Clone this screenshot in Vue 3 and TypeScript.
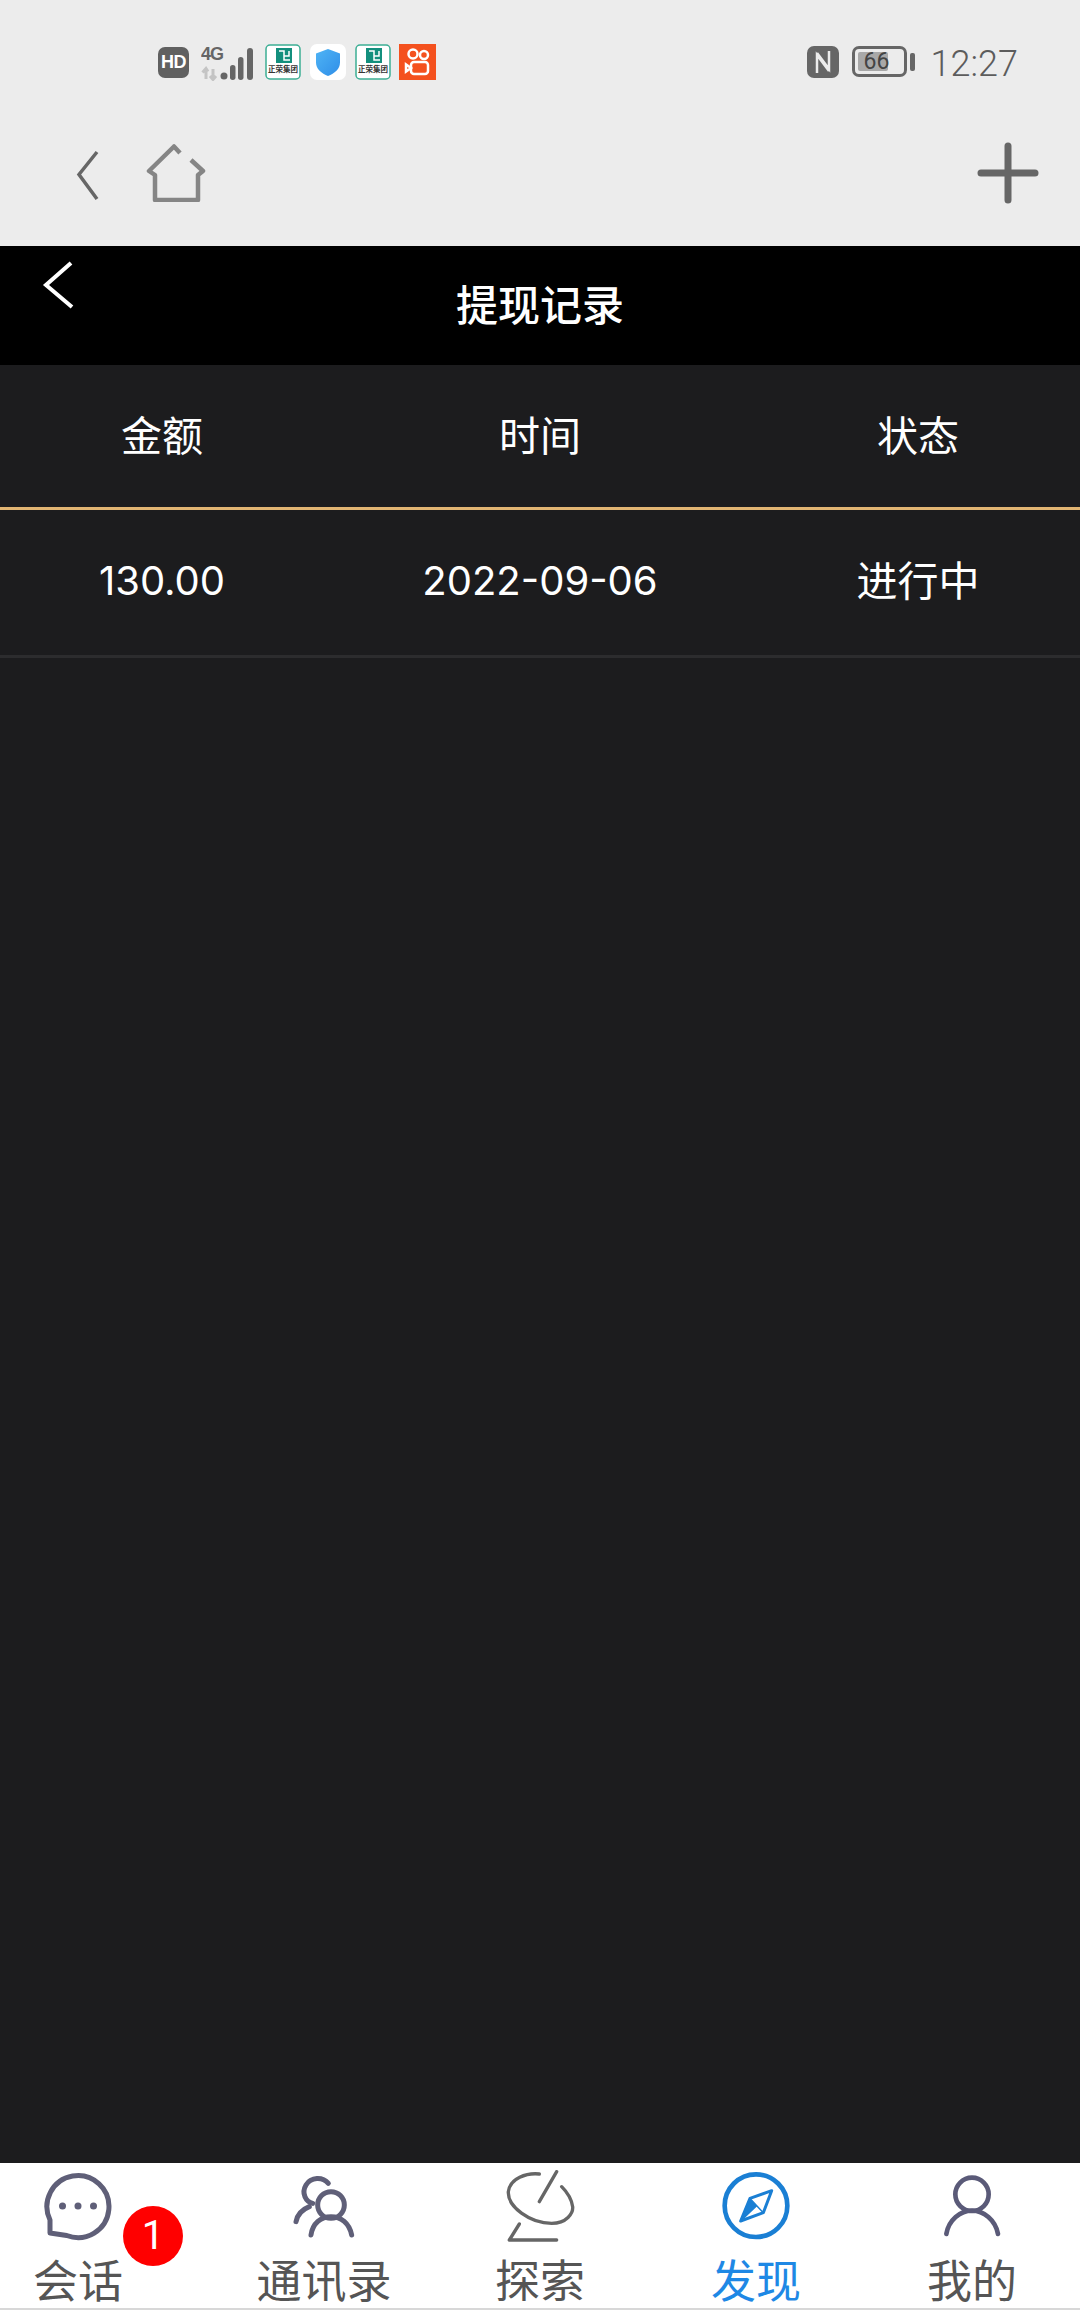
<script setup lang="ts">
interface Tab { label: string; active?: boolean; badge?: number }
const columns: string[] = ['金额', '时间', '状态']
const record: string[] = ['130.00', '2022-09-06', '进行中']
const tabs: Tab[] = [
  { label: '会话', badge: 1 },
  { label: '通讯录' },
  { label: '探索' },
  { label: '发现', active: true },
  { label: '我的' },
]
</script>

<template>
  <div class="page">
    <header class="system">
      <div class="status">
        <div class="status-left">
          <span class="hd">HD</span>
          <svg class="signal" width="54" height="36" viewBox="0 0 54 36">
            <text x="0" y="15" class="net">4G</text>
            <path d="M5 24v10M1.500 27.500 5 23.500l2 3M12 24v10M9 31l3 3.500 3-3.500" fill="none" stroke="#c4c4c4" stroke-width="3" />
            <g fill="#666">
              <circle cx="23" cy="31" r="3.500" />
              <rect x="29" y="20" width="5.500" height="15" rx="2.700" />
              <rect x="37" y="12" width="5.500" height="23" rx="2.700" />
              <rect x="46" y="3" width="6" height="32" rx="3" />
            </g>
          </svg>
          <svg class="app" width="36" height="36" viewBox="0 0 36 36">
            <rect x="1" y="1" width="34" height="34" rx="4" fill="#fff" stroke="#3cae94" stroke-width="1.500" />
            <rect x="11" y="4" width="16" height="15" fill="#138f7d" />
            <path d="M14 7h5v9h6M24 7v5h-5" fill="none" stroke="#fff" stroke-width="1.500" />
            <text x="18" y="28" class="tiny">正荣集团</text>
          </svg>
          <svg class="app" width="36" height="36" viewBox="0 0 36 36">
            <rect width="36" height="36" rx="7" fill="#fff" />
            <defs>
              <linearGradient id="shield" x1="0" y1="0" x2="1" y2="1">
                <stop offset="0" stop-color="#4fb4f5" />
                <stop offset="1" stop-color="#2f8ee8" />
              </linearGradient>
            </defs>
            <path d="M18 5 30 9.500v9C30 25 24.500 29.500 18 32 11.500 29.500 6 25 6 18.500v-9Z" fill="url(#shield)" />
          </svg>
          <svg class="app" width="36" height="36" viewBox="0 0 36 36">
            <rect x="1" y="1" width="34" height="34" rx="4" fill="#fff" stroke="#3cae94" stroke-width="1.500" />
            <rect x="11" y="4" width="16" height="15" fill="#138f7d" />
            <path d="M14 7h5v9h6M24 7v5h-5" fill="none" stroke="#fff" stroke-width="1.500" />
            <text x="18" y="28" class="tiny">正荣集团</text>
          </svg>
          <svg class="app last" width="37" height="36" viewBox="0 0 37 36">
            <rect width="37" height="36" fill="#f4511e" />
            <g fill="none" stroke="#fff" stroke-width="2.500">
              <circle cx="14" cy="10" r="4.500" />
              <circle cx="25" cy="11" r="4" />
              <rect x="12" y="18" width="17" height="12" rx="3" />
              <path d="M12 24 7 20.500v7Z" />
            </g>
          </svg>
        </div>
        <div class="status-right">
          <svg width="32" height="32" viewBox="0 0 32 32">
            <rect width="32" height="32" rx="7" fill="#666" />
            <path d="M10 27V9l12 16M22 5v18L10 7" fill="none" stroke="#ececec" stroke-width="2.500" />
          </svg>
          <div class="battery">
            <span class="battery-fill"></span>
            <span class="battery-text">66</span>
          </div>
          <span class="battery-tip"></span>
          <span class="clock">12:27</span>
        </div>
      </div>
      <div class="toolbar">
        <svg class="tool-back" width="24" height="51" viewBox="0 0 24 51">
          <path d="M21 2 3 24.500 21 49" fill="none" stroke="#666" stroke-width="3.500" />
        </svg>
        <svg class="tool-home" width="62" height="62" viewBox="0 0 62 62">
          <path d="M34 13 28 6.500 3 31l6 4v25h43V35l5-4-12-11" fill="none" stroke="#858585" stroke-width="4.500" stroke-linejoin="round" />
        </svg>
        <svg class="tool-plus" width="66" height="66" viewBox="0 0 66 66">
          <path d="M6 33h54M33 6v54" fill="none" stroke="#666" stroke-width="7" stroke-linecap="round" />
        </svg>
      </div>
    </header>

    <div class="titlebar">
      <svg class="title-back" width="34" height="50" viewBox="0 0 34 50">
        <path d="M30 3 5 25l26 22" fill="none" stroke="#fff" stroke-width="4" />
      </svg>
      <h1 class="title">提现记录</h1>
    </div>

    <main class="content">
      <div class="row head">
        <span v-for="c in columns" :key="c" class="cell">{{ c }}</span>
      </div>
      <div class="row item">
        <span v-for="v in record" :key="v" class="cell">{{ v }}</span>
      </div>
    </main>

    <nav class="tabs">
      <div
        v-for="(t, i) in tabs"
        :key="t.label"
        class="tab"
        :class="{ active: t.active, first: i === 0 }"
      >
        <svg v-if="i === 0" class="icon" width="72" height="72" viewBox="0 0 72 72">
          <path d="M24.700 65.500A31 31 0 1 0 8 50v13Z" fill="none" stroke="#5f5f78" stroke-width="5" stroke-linejoin="round" />
          <circle cx="20.500" cy="36" r="3.500" fill="#5f5f78" />
          <circle cx="36" cy="36" r="3.500" fill="#5f5f78" />
          <circle cx="51.500" cy="36" r="3.500" fill="#5f5f78" />
        </svg>
        <svg v-else-if="i === 1" class="icon" width="72" height="72" viewBox="861 60 216 216">
          <g fill="none" stroke="#5f5f78" stroke-width="15" stroke-linecap="round">
            <circle cx="990" cy="165" r="40" />
            <path d="M930 255C935 220 960 200 990 200S1045 220 1052 255" />
            <path d="M982 100C965 80 930 80 915 105 900 130 915 155 935 160" />
            <path d="M885 215C890 190 905 178 925 170" />
          </g>
        </svg>
        <svg v-else-if="i === 2" class="icon" width="72" height="72" viewBox="252 60 216 216">
          <g fill="none" stroke="#666" stroke-width="10" stroke-linecap="round" stroke-linejoin="round">
            <path d="M358 72C320 68 270 85 265 125 262 170 330 220 395 220 440 220 460 190 458 170 455 150 440 125 425 110" />
            <path d="M410 65 358 155" />
            <path d="M298 222 268 270H410" />
          </g>
        </svg>
        <svg v-else-if="i === 3" class="icon" width="72" height="72" viewBox="900 60 216 216">
          <circle cx="1008" cy="167" r="94" fill="none" stroke="#1a7fd4" stroke-width="14" />
          <path d="M1055 122 990 145 962 213 1030 188Z" fill="none" stroke="#1a7fd4" stroke-width="9" stroke-linejoin="round" />
          <path d="M990 145 1030 188 1010 167 962 213 990 145Z" fill="#1a7fd4" stroke="#1a7fd4" stroke-width="4" />
        </svg>
        <svg v-else class="icon" width="72" height="72" viewBox="287 60 216 216">
          <g fill="none" stroke="#5a5a78" stroke-width="14" stroke-linecap="round">
            <circle cx="395" cy="133" r="50" />
            <path d="M318 252C325 210 360 182 395 182S465 210 473 252" />
          </g>
        </svg>
        <span class="label">{{ t.label }}</span>
        <span v-if="t.badge" class="badge">{{ t.badge }}</span>
      </div>
    </nav>
  </div>
</template>

<style scoped>
.page {
  display: flex;
  flex-direction: column;
  height: 2310px;
  width: 1080px;
  overflow: hidden;
  font-family: Inter, "Noto Sans CJK SC", sans-serif;
  background: #1c1c1e;
}
.system {
  height: 246px;
  background: #ececec;
  display: flex;
  flex-direction: column;
  flex: none;
}
.status {
  height: 125px;
  padding: 44px 62px 0 158px;
  box-sizing: border-box;
  display: flex;
  justify-content: space-between;
  align-items: flex-start;
}
.status-left,
.status-right {
  display: flex;
  align-items: flex-start;
}
.hd {
  width: 31px;
  height: 31px;
  margin-top: 3px;
  border-radius: 7px;
  background: #606060;
  color: #fff;
  font: 700 18px/31px "Liberation Sans", sans-serif;
  letter-spacing: -0.5px;
  text-align: center;
}
.signal { margin: 1px 0 0 12px; }
.net { font: 700 18px "Liberation Sans", sans-serif; letter-spacing: -1px; fill: #666; }
.app { margin-left: 9px; }
.signal + .app { margin-left: 10px; }
.app.last { margin-left: 8px; }
.tiny { font: 700 7.500px "Noto Sans CJK SC", sans-serif; fill: #333; text-anchor: middle; }
.status-right { padding-top: 2px; }
.battery {
  position: relative;
  width: 55px;
  height: 31px;
  margin-left: 13px;
  box-sizing: border-box;
  border: 3px solid #666;
  border-radius: 7px;
}
.battery-fill {
  position: absolute;
  left: 3px;
  top: 3px;
  width: 30px;
  height: 19px;
  border-radius: 2px;
  background: #a8a8a8;
}
.battery-text {
  position: absolute;
  left: 9px;
  top: 1px;
  font: 400 23px/24px Roboto, sans-serif;
  color: #444;
}
.battery-tip {
  width: 5px;
  height: 18px;
  margin: 7px 0 0 3px;
  border-radius: 2px;
  background: #666;
}
.clock {
  margin: 0 0 0 16px;
  font-family: Roboto, sans-serif;
  font-size: 36px;
  line-height: 36px;
  font-weight: 300;
  color: #5c5c5c;
}
.toolbar {
  flex: 1;
  display: flex;
  align-items: flex-start;
  padding: 18px 39px 0 76px;
}
.tool-back { margin-top: 7px; }
.tool-home { margin: -3px 0 0 46px; }
.tool-plus { margin: -3px 0 0 auto; }
.titlebar {
  position: relative;
  height: 119px;
  flex: none;
  background: #000;
  display: flex;
  justify-content: center;
  align-items: center;
  padding-bottom: 7px;
  box-sizing: border-box;
}
.title-back { position: absolute; left: 41px; top: 14px; }
.title {
  margin: 0;
  font-size: 42px;
  font-weight: 500;
  color: #fff;
  font-family: "Noto Sans CJK SC", sans-serif;
}
.content { flex: 1; }
.row {
  display: grid;
  grid-template-columns: 3fr 4fr 3fr;
  color: #fff;
  font-size: 40px;
  text-align: center;
}
.cell { font-weight: 400; }
.head {
  height: 145px;
  font-size: 41px;
  line-height: 143px;
  box-sizing: border-box;
  border-bottom: 3px solid #e1b573;
}
.item {
  height: 148px;
  line-height: 142px;
  box-sizing: border-box;
  border-bottom: 3px solid #2c2c2e;
}
.item .cell:last-child { font-size: 41px; }
.tabs {
  height: 147px;
  flex: none;
  box-sizing: border-box;
  background: #fff;
  border-bottom: 2px solid #d8d8d8;
  display: grid;
  grid-template-columns: repeat(5, 1fr);
}
.tab {
  position: relative;
  display: flex;
  flex-direction: column;
  align-items: center;
  padding-top: 7px;
  color: #555;
}
.tab.first { padding-right: 60px; }
.tab.active { color: #1e88e5; }
.icon { display: block; flex: none; }
.label {
  margin-top: 8px;
  font: 400 45px/58px "Noto Sans CJK SC", sans-serif;
}
.badge {
  position: absolute;
  left: 123px;
  top: 43px;
  width: 60px;
  height: 60px;
  border-radius: 50%;
  background: #f00;
  color: #fff;
  font: 400 40px/60px Roboto, sans-serif;
  text-align: center;
}
</style>
